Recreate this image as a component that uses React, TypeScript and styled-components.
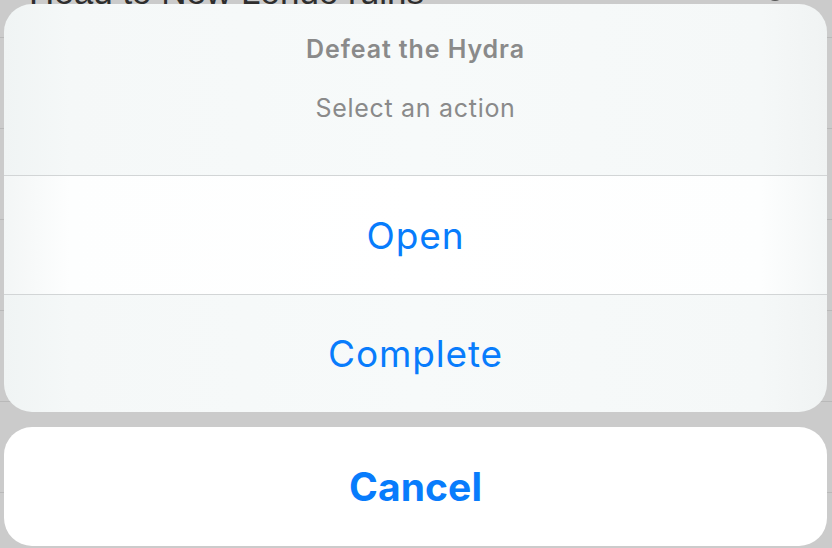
import React from "react";
import styled, { createGlobalStyle } from "styled-components";

const GlobalStyle = createGlobalStyle`
  html, body { margin: 0; padding: 0; }
  body {
    background: #cbcbcb;
    font-family: Inter, "Liberation Sans", Arial, sans-serif;
    overflow: hidden;
  }
`;

const Screen = styled.div`
  position: relative;
  width: 832px;
  height: 548px;
  overflow: hidden;
  background: #cbcbcb;
`;

const BackList = styled.div`
  display: flex;
  flex-direction: column;
  margin-top: -53px;
`;

const BackRow = styled.div`
  height: 90px;
  display: flex;
  align-items: center;
  justify-content: space-between;
  padding: 0 46px 0 29px;
  border-bottom: 1px solid #b9b9b9;
  color: #2e2e2e;
  font-family: "Liberation Sans", Arial, sans-serif;
  font-size: 35px;
`;

const RowIcon = styled.svg`
  width: 22px;
  height: 22px;
  flex: none;
`;

const Overlay = styled.div`
  position: absolute;
  inset: 0;
  display: flex;
  flex-direction: column;
  gap: 15px;
  padding: 4px 5px 0 4px;
`;

const ActionGroup = styled.div`
  display: flex;
  flex-direction: column;
  border-radius: 28px;
  overflow: hidden;
  background: linear-gradient(
    90deg,
    #f0f4f4 0%,
    #f5f8f8 8%,
    #f7fafa 50%,
    #f5f8f8 92%,
    #f0f3f3 100%
  );
`;

const Header = styled.div`
  height: 171px;
  box-sizing: border-box;
  padding-top: 30px;
  display: flex;
  flex-direction: column;
  align-items: center;
  gap: 29px;
  color: #8a8a8a;
  font-size: 25px;
  line-height: 30px;
`;

const Title = styled.div`
  font-weight: 600;
  letter-spacing: 0.9px;
`;

const Subtitle = styled.div`
  font-weight: 400;
  letter-spacing: 0.7px;
`;

const ActionButton = styled.button<{ $light?: boolean }>`
  height: ${(p) => (p.$light ? 119 : 118)}px;
  box-sizing: border-box;
  border: 0;
  border-top: 1px solid #d2d5d6;
  margin: 0;
  padding: 0;
  display: flex;
  align-items: center;
  justify-content: center;
  font-family: Inter, "Liberation Sans", Arial, sans-serif;
  font-size: 37px;
  letter-spacing: 0.85px;
  color: #087cfc;
  background: ${(p) =>
    p.$light
      ? "linear-gradient(90deg, #f3f6f6 0%, #fdfefe 8%, #ffffff 50%, #fdfefe 92%, #f3f6f6 100%)"
      : "transparent"};
  cursor: pointer;
`;

const CancelButton = styled.button`
  height: 119px;
  border: 0;
  margin: 0;
  padding: 0;
  border-radius: 28px;
  background: #ffffff;
  display: flex;
  align-items: center;
  justify-content: center;
  font-family: Inter, "Liberation Sans", Arial, sans-serif;
  font-weight: 700;
  font-size: 39px;
  letter-spacing: 0.1px;
  color: #087cfc;
  cursor: pointer;
`;

const rows = ["Head to New Londo ruins", "", "", "", "", "", ""];

export default function App() {
  return (
    <>
      <GlobalStyle />
      <Screen>
        <BackList>
          {rows.map((r, i) => (
            <BackRow key={i}>
              <span>{r}</span>
              {i === 0 && (
                <RowIcon viewBox="0 0 22 22">
                  <circle cx="11" cy="11" r="8" fill="none" stroke="#555" strokeWidth="2" />
                  <circle cx="11" cy="11" r="3" fill="#555" />
                </RowIcon>
              )}
            </BackRow>
          ))}
        </BackList>
        <Overlay>
          <ActionGroup>
            <Header>
              <Title>Defeat the Hydra</Title>
              <Subtitle>Select an action</Subtitle>
            </Header>
            <ActionButton $light>Open</ActionButton>
            <ActionButton>Complete</ActionButton>
          </ActionGroup>
          <CancelButton>Cancel</CancelButton>
        </Overlay>
      </Screen>
    </>
  );
}
